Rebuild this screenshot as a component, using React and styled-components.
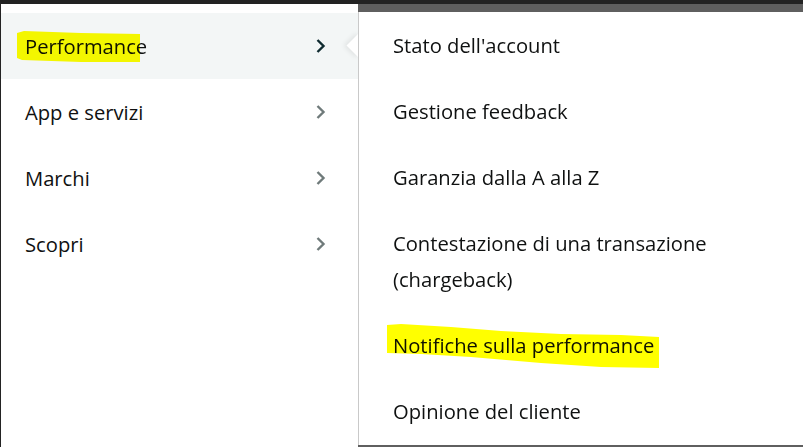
import React from "react"
import styled, { createGlobalStyle } from "styled-components"

const GlobalStyle = createGlobalStyle`
  html, body {
    margin: 0;
    padding: 0;
    background: #232323;
    overflow: hidden;
  }
  body {
    font-family: "Open Sans", "Noto Sans", Arial, sans-serif;
  }
`

const Page = styled.div`
  width: 803px;
  height: 447px;
  display: flex;
  flex-direction: column;
  background: #232323;
`
const TopBar = styled.div`
  height: 4px;
  flex: none;
  background: #232323;
`
const Main = styled.div`
  flex: 1;
  display: flex;
  min-height: 0;
`
const LeftPanel = styled.div`
  width: 357px;
  flex: none;
  margin-left: 1px;
  padding-top: 9px;
  background: #fff;
  position: relative;
  z-index: 2;
`
const CategoryRow = styled.div`
  position: relative;
  box-sizing: border-box;
  height: 66px;
  display: flex;
  align-items: center;
  justify-content: space-between;
  padding: 0 32px 1px 24px;
  background: ${(p) => (p.$active ? "#f3f6f6" : "#fff")};
  font-size: 20.2px;
  color: #0f1111;
`
const Pointer = styled.div`
  position: absolute;
  right: -9px;
  top: 50%;
  width: 17px;
  height: 17px;
  margin-top: -9px;
  background: #fff;
  transform: rotate(45deg);
  box-shadow: -2px 2px 5px rgba(0, 0, 0, 0.08);
  z-index: 3;
`
const Backdrop = styled.div`
  flex: 1;
  display: flex;
  padding: 8px 0 2px;
  background: #5f5f5f;
  min-width: 0;
`
const RightPanel = styled.div`
  flex: 1;
  background: #fff;
  border-left: 1px solid #c9c9c9;
  padding-top: 1px;
  position: relative;
  z-index: 4;
`
const LinkRow = styled.div`
  position: relative;
  padding: 14px 20px 16px 34px;
  font-size: 20.2px;
  line-height: 36px;
  color: #0f1111;
`
const Marker = styled.svg`
  position: absolute;
  left: 0;
  top: 0;
  width: 100%;
  height: 100%;
  pointer-events: none;
  mix-blend-mode: multiply;
  overflow: visible;
`

const Chevron = ({ active }) => (
  <svg width="11" height="14" viewBox="0 0 11 14">
    <path
      d="M2.5 1 L8.5 7 L2.5 13"
      fill="none"
      stroke={active ? "#0f2b30" : "#6f7a7a"}
      strokeWidth="2.4"
    />
  </svg>
)

const Highlight = ({ points }) => (
  <Marker>
    <polygon points={points} fill="#ffff00" />
  </Marker>
)

const categories = ["Performance", "App e servizi", "Marchi", "Scopri"]

const links = [
  { label: "Stato dell'account" },
  { label: "Gestione feedback" },
  { label: "Garanzia dalla A alla Z" },
  { label: "Contestazione di una transazione (chargeback)", wrap: true },
  {
    label: "Notifiche sulla performance",
    mark: "28,12 42,11 92,14 142,18 202,21 262,22 300,24 300,55 242,54 182,50 112,44 62,41 28,40",
  },
  { label: "Opinione del cliente" },
]

export default function App() {
  return (
    <Page>
      <GlobalStyle />
      <TopBar />
      <Main>
        {/* Categories */}
        <LeftPanel>
          {categories.map((c, i) => (
            <CategoryRow key={c} $active={i === 0}>
              <span>{c}</span>
              <Chevron active={i === 0} />
              {i === 0 && (
                <Highlight points="16,20 23,18 80,20 139,21 139,49 80,49 21,47 16,45" />
              )}
              {i === 0 && <Pointer />}
            </CategoryRow>
          ))}
        </LeftPanel>
        {/* Submenu */}
        <Backdrop>
          <RightPanel>
            {links.map((l) => (
              <LinkRow key={l.label}>
                {l.wrap ? (
                  <>
                    Contestazione di una transazione
                    <br />
                    (chargeback)
                  </>
                ) : (
                  l.label
                )}
                {l.mark && <Highlight points={l.mark} />}
              </LinkRow>
            ))}
          </RightPanel>
        </Backdrop>
      </Main>
    </Page>
  )
}
